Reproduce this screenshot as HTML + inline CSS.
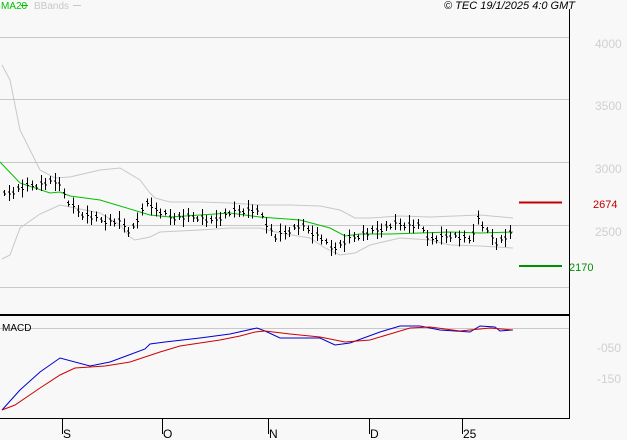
<!DOCTYPE html>
<html><head><meta charset="utf-8"><style>
html,body{margin:0;padding:0;background:#f8f8f8;width:627px;height:440px;overflow:hidden}
svg text{font-family:"Liberation Sans",sans-serif}
</style></head><body>
<svg id="s" width="627" height="440" xmlns="http://www.w3.org/2000/svg" shape-rendering="crispEdges">
<rect width="627" height="440" fill="#f8f8f8"/>
<g stroke="#c8c8c8" stroke-width="1">
<line x1="0" y1="37.5" x2="569" y2="37.5"/>
<line x1="0" y1="99.5" x2="569" y2="99.5"/>
<line x1="0" y1="162.5" x2="569" y2="162.5"/>
<line x1="0" y1="225.5" x2="569" y2="225.5"/>
<line x1="0" y1="287.5" x2="569" y2="287.5"/>
<line x1="0" y1="328.5" x2="569" y2="328.5"/>
</g>
<g fill="#d0d0d0" font-size="12">
<text x="595" y="48">4000</text>
<text x="595" y="110">3500</text>
<text x="595" y="173">3000</text>
<text x="595" y="236">2500</text>
<text x="597" y="352">-050</text>
<text x="597" y="383">-150</text>
</g>
<line x1="569.5" y1="9" x2="569.5" y2="419" stroke="#000"/>
<line x1="0" y1="315" x2="570" y2="315" stroke="#000" stroke-width="2"/>
<line x1="0" y1="418.5" x2="570" y2="418.5" stroke="#000"/>
<g stroke="#000">
<line x1="62.5" y1="419" x2="62.5" y2="434"/>
<line x1="162.5" y1="419" x2="162.5" y2="434"/>
<line x1="268.5" y1="419" x2="268.5" y2="434"/>
<line x1="369.5" y1="419" x2="369.5" y2="434"/>
<line x1="462.5" y1="419" x2="462.5" y2="434"/>
</g>
<g font-size="12" fill="#000">
<text x="63" y="438">S</text><text x="163" y="438">O</text><text x="269" y="438">N</text><text x="370" y="438">D</text><text x="463" y="438">25</text>
</g>
<text x="2" y="331" font-size="10" fill="#000">MACD</text>
<text x="1" y="9" font-size="10" fill="#00c000">MA20</text>
<line x1="21" y1="5.5" x2="28" y2="5.5" stroke="#00c000"/>
<text x="34" y="9" font-size="10" fill="#c8c8c8">BBands</text>
<line x1="73" y1="5.5" x2="81" y2="5.5" stroke="#c8c8c8"/>
<text x="575" y="9" font-size="11" font-style="italic" fill="#000" text-anchor="end">© TEC 19/1/2025 4:0 GMT</text>
<line x1="519" y1="202.5" x2="562" y2="202.5" stroke="#c00000" stroke-width="2"/>
<text x="593" y="208" font-size="11" fill="#c00000">2674</text>
<line x1="519" y1="266" x2="562" y2="266" stroke="#009000" stroke-width="2"/>
<text x="569" y="271" font-size="11" fill="#009000">2170</text>
<g fill="none" shape-rendering="auto">
<polyline stroke="#c8c8c8" points="2,65 10,80 20,130 40,170 55,178 70,177 100,170 120,168 140,180 150,193 155,198 170,202 200,202 230,203 260,205 290,205 320,206 340,210 355,218 370,218 400,216 430,217 480,215 513,218"/>
<polyline stroke="#c8c8c8" points="2,259 10,255 20,228 40,214 60,205 100,213 120,225 130,237 135,240 150,237 160,232 200,230 230,228 260,228 280,233 310,238 325,248 340,255 355,253 370,245 400,238 430,240 450,245 480,246 513,248"/>
<polyline stroke="#00c000" points="0,162 20,183 50,193 60,192 70,196 100,200 120,206 140,212 150,215 170,217 200,215 230,213 260,217 300,220 330,228 345,236 360,234 390,234 420,233 450,232 480,233 513,232"/>
<polyline stroke="#0000d0" points="2,410 20,390 40,372 60,358 90,366 110,362 145,349 150,344 165,342 200,338 230,334 257,328 265,331 280,338 320,338 335,345 350,343 380,332 400,326 420,326 440,330 470,332 480,326 495,327 500,331 513,330"/>
<polyline stroke="#d00000" points="2,410 15,405 40,388 60,375 75,368 105,366 130,362 160,352 180,346 220,340 240,336 255,332 265,331 290,334 320,337 345,342 370,340 390,334 410,328 430,327 460,331 490,328 513,330"/>
</g>
<g id="bars" stroke="#000"></g>
</svg>
<script>
var pts=[[4,195],[20,188],[50,182],[60,182],[64,195],[70,205],[80,213],[100,220],[120,222],[130,232],[140,215],[148,200],[155,210],[170,217],[200,217],[210,222],[230,212],[250,210],[260,213],[270,230],[275,237],[300,225],[320,237],[330,248],[340,245],[350,238],[370,232],[395,224],[420,226],[430,240],[450,235],[470,240],[478,218],[485,230],[497,243],[505,237],[513,232]];
function f(x){for(var i=0;i<pts.length-1;i++){if(x<=pts[i+1][0]){var a=pts[i],b=pts[i+1];return a[1]+(b[1]-a[1])*(x-a[0])/(b[0]-a[0]);}}return pts[pts.length-1][1];}
var g=document.getElementById('bars'),h='',k=0;
for(var x=4;x<=513;x+=4.6){var xi=Math.round(x)+0.5,c=f(x)+((k*7)%5-2),r=3+(k*5)%7;k++;
h+='<line x1="'+xi+'" y1="'+(c-r)+'" x2="'+xi+'" y2="'+(c+r)+'"/><line x1="'+(xi-1.5)+'" y1="'+(c-1)+'" x2="'+xi+'" y2="'+(c-1)+'"/><line x1="'+xi+'" y1="'+(c+1)+'" x2="'+(xi+1.5)+'" y2="'+(c+1)+'"/>';}
g.innerHTML=h;
</script>
</body></html>
